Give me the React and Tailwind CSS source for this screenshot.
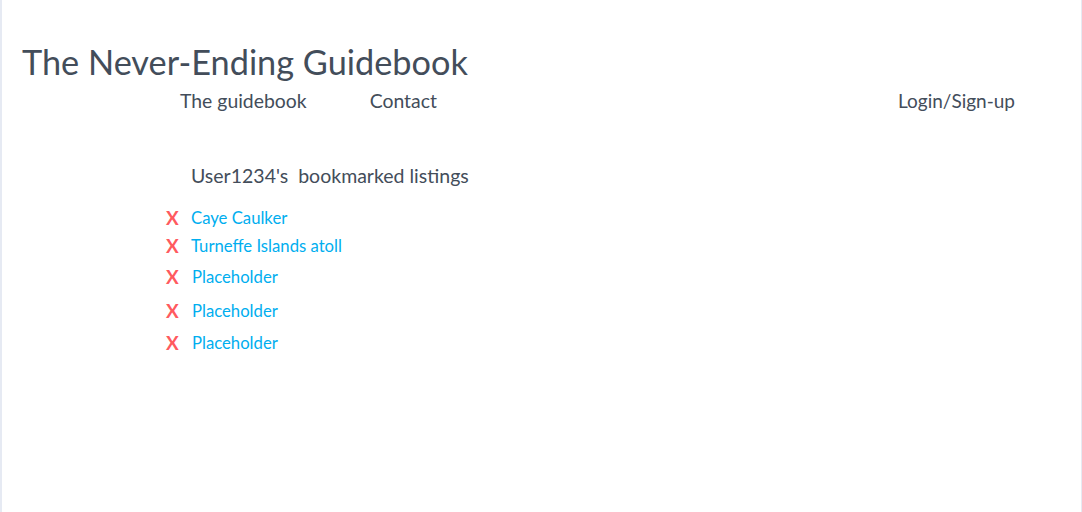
export default function App() {
  const items = [
    { name: "Caye Caulker", mt: "mt-0", pl: "pl-0" },
    { name: "Turneffe Islands atoll", mt: "mt-[6px]", pl: "pl-0" },
    { name: "Placeholder", mt: "mt-[9px]", pl: "pl-[1px]" },
    { name: "Placeholder", mt: "mt-[12px]", pl: "pl-[1px]" },
    { name: "Placeholder", mt: "mt-[10px]", pl: "pl-[1px]" },
  ];
  return (
    <div className="min-h-[512px] w-[1082px] bg-white border-l-2 border-r border-[#e6eaf3] text-[#434d5a] font-['Lato','Open_Sans',sans-serif]">
      <header className="pt-[40px]">
        <h1 className="pl-[20px] text-[34.3px] leading-[44px]">The Never-Ending Guidebook</h1>
        <nav className="flex items-center mt-[5px] text-[19.4px] leading-[24px]">
          <a className="ml-[178px]">The guidebook</a>
          <a className="ml-[63px]">Contact</a>
          <a className="ml-auto mr-[66px] text-[19px]">Login/Sign-up</a>
        </nav>
      </header>
      <main className="pl-[164px] mt-[51px]">
        <h2 className="pl-[25px] text-[19.5px] leading-[24px]">User1234's&nbsp; bookmarked listings</h2>
        <ul className="mt-[19px]">
          {items.map((it, i) => (
            <li key={i} className={`flex items-center ${it.mt}`}>
              <span className="w-[25px] text-[#ff5a5f] font-bold text-[19px] leading-[22px]">X</span>
              <a className={`${it.pl} text-[#00aeef] text-[16.7px] leading-[22px]`}>{it.name}</a>
            </li>
          ))}
        </ul>
      </main>
    </div>
  );
}
